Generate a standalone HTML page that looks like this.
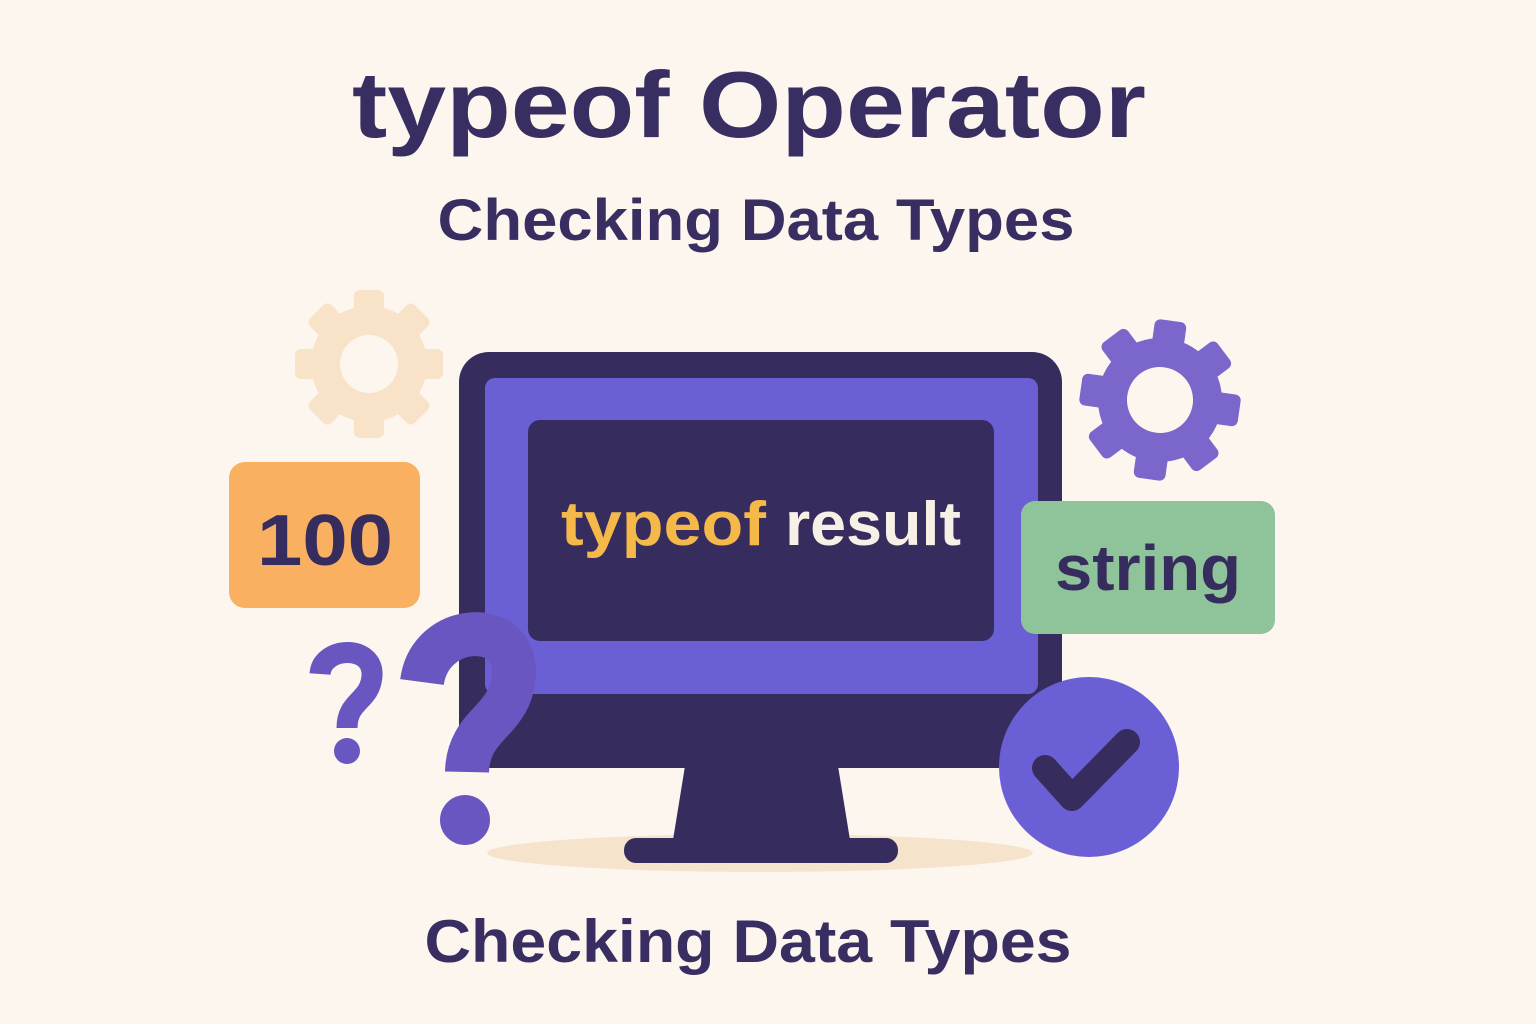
<!DOCTYPE html>
<html><head><meta charset="utf-8"><style>
html,body{margin:0;padding:0;background:#fdf6ee;}
svg{display:block}
text{font-family:"Liberation Sans",sans-serif;font-weight:bold}
</style></head><body>
<svg width="1536" height="1024" viewBox="0 0 1536 1024">
<rect width="1536" height="1024" fill="#fdf6ee"/>
<text x="749" y="137" text-anchor="middle" font-size="94" fill="#392e62" textLength="794" lengthAdjust="spacingAndGlyphs">typeof Operator</text>
<text x="756" y="240" text-anchor="middle" font-size="58" fill="#392e62" textLength="637" lengthAdjust="spacingAndGlyphs">Checking Data Types</text>
<text x="748" y="962" text-anchor="middle" font-size="60" fill="#392e62" textLength="647" lengthAdjust="spacingAndGlyphs">Checking Data Types</text>

<!-- left gear -->
<g transform="translate(369,364)" fill="#f8e2c8">
<circle r="58"/>
<g id="t1"><rect x="-15" y="-74" width="30" height="32" rx="6"/></g>
<use href="#t1" transform="rotate(45)"/><use href="#t1" transform="rotate(90)"/><use href="#t1" transform="rotate(135)"/>
<use href="#t1" transform="rotate(180)"/><use href="#t1" transform="rotate(225)"/><use href="#t1" transform="rotate(270)"/><use href="#t1" transform="rotate(315)"/>
<circle r="29" fill="#fdf6ee"/>
</g>
<!-- right gear -->
<g transform="translate(1160,400) rotate(8)" fill="#7b66cc">
<circle r="62"/>
<g id="t2"><rect x="-16" y="-80" width="32" height="34" rx="6"/></g>
<use href="#t2" transform="rotate(45)"/><use href="#t2" transform="rotate(90)"/><use href="#t2" transform="rotate(135)"/>
<use href="#t2" transform="rotate(180)"/><use href="#t2" transform="rotate(225)"/><use href="#t2" transform="rotate(270)"/><use href="#t2" transform="rotate(315)"/>
<circle r="33" fill="#fdf6ee"/>
</g>

<!-- shadow -->
<ellipse cx="760" cy="853" rx="273" ry="19" fill="#f6e3cc"/>
<!-- stand -->
<polygon points="685,766 838,766 850,840 673,840" fill="#372c5e"/>
<rect x="624" y="838" width="274" height="25" rx="12" fill="#372c5e"/>
<!-- monitor -->
<rect x="459" y="352" width="603" height="416" rx="30" fill="#372c5e"/>
<rect x="485" y="378" width="553" height="316" rx="10" fill="#6b5fd6"/>
<rect x="528" y="420" width="466" height="221" rx="12" fill="#372c5e"/>
<text x="561" y="545" font-size="62" fill="#f5b94a" textLength="205" lengthAdjust="spacingAndGlyphs">typeof</text>
<text x="785" y="545" font-size="62" fill="#f7f0e6" textLength="176" lengthAdjust="spacingAndGlyphs">result</text>

<!-- 100 -->
<rect x="229" y="462" width="191" height="146" rx="16" fill="#f9b061"/>
<text x="325" y="565" text-anchor="middle" font-size="72" fill="#372c5e" textLength="136" lengthAdjust="spacingAndGlyphs">100</text>
<!-- string -->
<rect x="1021" y="501" width="254" height="133" rx="14" fill="#8fc49a"/>
<text x="1148" y="590" text-anchor="middle" font-size="64" fill="#372c5e" textLength="186" lengthAdjust="spacingAndGlyphs">string</text>

<!-- question marks -->
<path d="M320,674 C322,646 374,644 372,676 C370,702 347,700 347,728" fill="none" stroke="#6a56c0" stroke-width="21"/>
<circle cx="347" cy="751" r="13" fill="#6a56c0"/>
<path d="M422,682 C430,622 515,618 514,672 C513,722 468,722 467,772" fill="none" stroke="#6a56c0" stroke-width="44"/>
<circle cx="465" cy="820" r="25" fill="#6a56c0"/>

<!-- check -->
<circle cx="1089" cy="767" r="90" fill="#6b5fd6"/>
<polyline points="1045,768 1072,798 1127,742" fill="none" stroke="#372c5e" stroke-width="26" stroke-linecap="round" stroke-linejoin="round"/>
</svg>
</body></html>
